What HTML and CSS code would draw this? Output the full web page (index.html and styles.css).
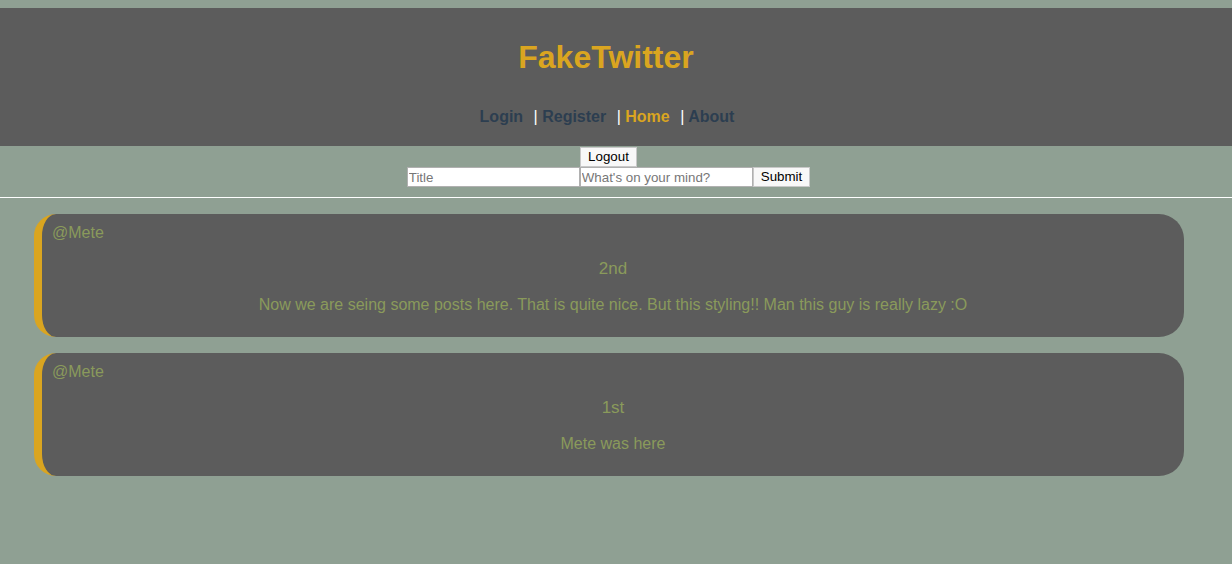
FILE: index.html
```html
<!DOCTYPE html>
<html>
<head>
<meta charset="utf-8">
<title>FakeTwitter</title>
<link rel="stylesheet" href="styles.css">
</head>
<body>
<header class="site-header">
  <h1 class="logo">FakeTwitter</h1>
  <nav class="nav">
    <a class="nav-link" href="#">Login</a> <span class="sep">|</span> <a class="nav-link" href="#">Register</a> <span class="sep">|</span> <a class="nav-link active" href="#">Home</a> <span class="sep">|</span> <a class="nav-link last" href="#">About</a>
  </nav>
</header>
<section class="toolbar">
  <div class="row"><button class="btn">Logout</button></div>
  <form class="row post-form">
    <input class="field" type="text" placeholder="Title"><input class="field" type="text" placeholder="What's on your mind?"><button class="btn" type="button">Submit</button>
  </form>
</section>
<hr class="divider">
<main class="feed">
  <article class="post">
    <p class="author">@Mete</p>
    <h3 class="post-title">2nd</h3>
    <p class="post-body">Now we are seing some posts here. That is quite nice. But this styling!! Man this guy is really lazy :O</p>
  </article>
  <article class="post">
    <p class="author">@Mete</p>
    <h3 class="post-title">1st</h3>
    <p class="post-body">Mete was here</p>
  </article>
</main>
</body>
</html>
```

FILE: styles.css
```css
html, body {
  margin: 0;
  padding: 0;
}
body {
  background: #8fa093;
  font-family: "Liberation Sans", Arial, sans-serif;
  font-size: 16px;
  padding-top: 8px;
}
.site-header {
  background: #5c5c5c;
  text-align: center;
  padding: 31px 20px 28px 0;
  height: 79px;
}
.logo {
  margin: 0;
  font-size: 32px;
  line-height: 37px;
  color: #daa520;
  font-weight: bold;
}
.nav {
  margin-top: 32px;
  line-height: 18px;
  font-weight: bold;
  font-size: 16px;
  padding-left: 2px;
}
.nav-link {
  color: #2c3e50;
  text-decoration: none;
  margin-right: 6px;
}
.nav-link.last {
  margin-right: 0;
}
.nav-link.active {
  color: #daa520;
}
.sep {
  color: #ffffff;
  font-weight: normal;
}
.toolbar {
  padding-right: 15px;
  padding-top: 1px;
  text-align: center;
}
.row {
  display: flex;
  justify-content: center;
}
.btn {
  font-family: "Liberation Sans", Arial, sans-serif;
  font-size: 13.33px;
  height: 20px;
  padding: 0 7px;
  background: #f8f8f8;
  border: 1px solid #c8c8c8;
  color: #000;
  line-height: 16px;
}
.field {
  box-sizing: border-box;
  width: 173px;
  height: 20px;
  border: 1px solid #b0b0b0;
  background: #fff;
  font-family: "Liberation Sans", Arial, sans-serif;
  font-size: 13.33px;
  padding: 0 1px;
}
.field::placeholder {
  color: #777;
}
.divider {
  border: 0;
  border-top: 1px solid #ffffff;
  margin: 10px 0 0 0;
  height: 0;
}
.feed {
  padding: 16px 48px 0 34px;
}
.post {
  background: #5c5c5c;
  border-left: 8px solid #daa520;
  border-radius: 22px 25px 25px 22px;
  padding: 10px 10px 23px 10px;
  margin-bottom: 16px;
  color: #8a9a5b;
}
.author {
  margin: 0;
  line-height: 18px;
}
.post-title {
  margin: 18px 0 0 0;
  text-align: center;
  font-size: 17px;
  font-weight: normal;
  line-height: 18px;
}
.post-body {
  margin: 18px 0 0 0;
  text-align: center;
  line-height: 18px;
}
```
